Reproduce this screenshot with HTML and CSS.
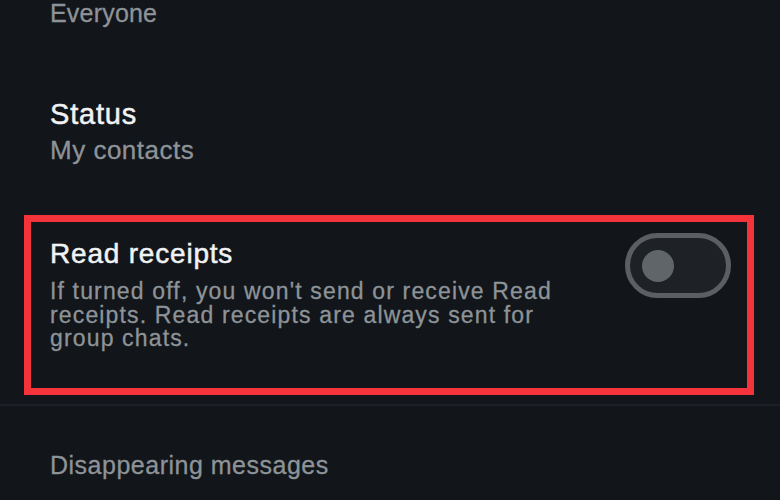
FILE: index.html
```html
<!DOCTYPE html>
<html lang="en">
<head>
    <meta charset="UTF-8">
    <meta name="viewport" content="width=device-width, initial-scale=1.0">
    <title>Privacy</title>
    <link rel="stylesheet" href="styles.css">
</head>
<body>
    <div class="page">
        <div class="item">
            <p class="sub sub-first">Everyone</p>
        </div>
        <div class="item item-status">
            <p class="title">Status</p>
            <p class="sub">My contacts</p>
        </div>
        <div class="item item-toggle highlight">
            <div class="text">
                <p class="title title-toggle">Read receipts</p>
                <p class="desc">If turned off, you won't send or receive Read receipts. Read receipts are always sent for group chats.</p>
            </div>
            <div class="switch">
                <span class="knob"></span>
            </div>
        </div>
        <div class="divider"></div>
        <p class="section">Disappearing messages</p>
    </div>
</body>
</html>
```

FILE: styles.css
```css
body {
    font-family: "Liberation Sans", Arial, sans-serif;
    background-color: #12161a;
    margin: 0;
    padding: 0;
    overflow: hidden;
}
p {
    margin: 0;
    -webkit-text-stroke: 0.3px currentColor;
}
.page {
    width: 780px;
    height: 500px;
}
.item {
    padding-left: 50px;
}
.sub {
    color: #8d9398;
    font-size: 26px;
    line-height: 30px;
    letter-spacing: 0.5px;
}
.sub-first {
    font-size: 25px;
    line-height: 26px;
    letter-spacing: 0.2px;
}
.item-status {
    margin-top: 72px;
}
.item-status .sub {
    margin-top: 5px;
}
.title {
    color: #f0f2f4;
    font-size: 29px;
    line-height: 32px;
    letter-spacing: 0.8px;
    -webkit-text-stroke: 0.5px currentColor;
}
.item-toggle {
    display: flex;
    justify-content: space-between;
    align-items: flex-start;
    margin: 50px 26px 0 24px;
    padding: 16px 16px 35px 19px;
    height: 180px;
    box-sizing: border-box;
}
.highlight {
    border: 7px solid #f5333a;
}
.title-toggle {
    font-size: 28px;
    letter-spacing: 0.8px;
}
.desc {
    color: #8d9398;
    font-size: 23px;
    line-height: 23.5px;
    letter-spacing: 1.15px;
    margin-top: 10px;
    max-width: 520px;
}
.switch {
    width: 106px;
    height: 65px;
    box-sizing: border-box;
    border: 5px solid #5b5f64;
    border-radius: 33px;
    background-color: #1e2226;
    margin-top: -5px;
    display: flex;
    align-items: center;
    padding-left: 12px;
}
.knob {
    width: 32px;
    height: 32px;
    border-radius: 50%;
    background-color: #60656a;
}
.divider {
    height: 2px;
    background-color: #1c2026;
    margin-top: 9px;
}
.section {
    color: #8d9398;
    font-size: 25px;
    line-height: 28px;
    letter-spacing: 0.5px;
    padding-left: 50px;
    margin-top: 45px;
}
```
